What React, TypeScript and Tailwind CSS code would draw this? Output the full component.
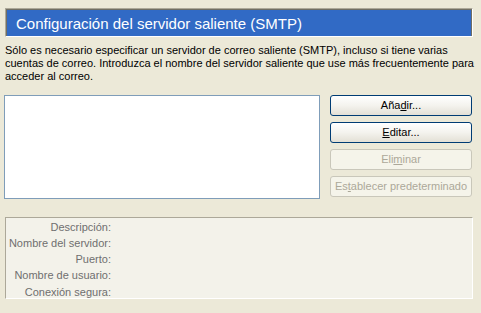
import React from "react"

const font = { fontFamily: '"Liberation Sans", Arial, sans-serif' }

function XpButton({ label, disabled }: { label: React.ReactNode; disabled?: boolean }) {
  return (
    <div
      className={
        disabled
          ? "h-[21px] w-[142px] flex items-center justify-center rounded-[3px] border border-[#C9C7BA] bg-[#F5F4EA] text-[11px] text-[#ACA899]"
          : "h-[21px] w-[142px] flex items-center justify-center rounded-[3px] border border-[#003C74] bg-gradient-to-b from-[#FFFFFF] via-[#F4F3EE] to-[#E3E0D6] text-[11px] text-black"
      }
    >
      <span className="leading-none">{label}</span>
    </div>
  )
}

export default function App() {
  const labels = ["Descripción:", "Nombre del servidor:", "Puerto:", "Nombre de usuario:", "Conexión segura:"]

  return (
    <div className="w-[481px] h-[313px] bg-[#ECE9D8] overflow-hidden text-black" style={font}>
      {/* cabecera */}
      <div className="ml-[5px] mt-[8px] w-[468px] h-[29px] border-t border-l border-[#ACA899] border-b border-r border-b-white border-r-white">
        <div className="h-full bg-[#316AC5] border-t border-l border-[#716F64] border-r border-r-[#716F64] flex items-center pl-[9px]">
          <span className="text-[15px] text-white leading-none">Configuración del servidor saliente (SMTP)</span>
        </div>
      </div>

      <p className="ml-[5px] mt-[7px] text-[11px] leading-[13px]">
        Sólo es necesario especificar un servidor de correo saliente (SMTP), incluso si tiene varias
        <br />
        cuentas de correo. Introduzca el nombre del servidor saliente que use más frecuentemente para
        <br />
        acceder al correo.
      </p>

      <div className="flex ml-[4px] mt-[12px] gap-[10px]">
        <div className="w-[316px] h-[104px] border border-[#7F9DB9] bg-white" />
        <div className="flex flex-col gap-[6px]">
          <XpButton label={<>Aña<u>d</u>ir...</>} />
          <XpButton label={<><u>E</u>ditar...</>} />
          <XpButton disabled label={<>Eli<u>m</u>inar</>} />
          <XpButton disabled label={<>Es<u>t</u>ablecer predeterminado</>} />
        </div>
      </div>

      <div className="ml-[5px] mt-[18px] w-[468px] h-[82px] border-t border-l border-[#ACA899] border-b border-r border-b-white border-r-white bg-[#F3F2EA] pt-[1px]">
        {labels.map((l) => (
          <div key={l} className="h-[16.25px] flex items-center">
            <span className="w-[105px] text-right text-[11px] text-[#6F6F6F] leading-none">{l}</span>
          </div>
        ))}
      </div>
    </div>
  )
}
